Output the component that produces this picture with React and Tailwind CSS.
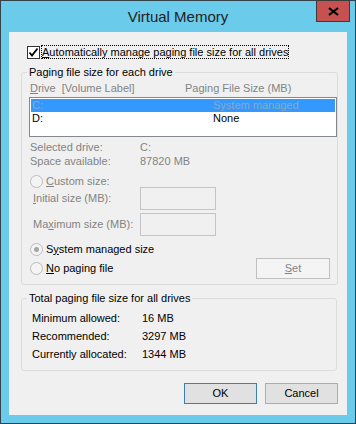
import React from 'react';

const Radio = ({ checked }) => (
  <span className="w-[13px] h-[13px] rounded-full border border-[#bcbcbc] bg-[#f4f4f4] flex items-center justify-center shrink-0">
    {checked && <span className="w-[5px] h-[5px] rounded-full bg-[#a6a6a6]" />}
  </span>
);

const Row = ({ label, value, className = '' }) => (
  <div className={`h-[14px] flex items-center ${className}`}>
    <span className="w-[110px]">{label}</span>
    <span>{value}</span>
  </div>
);

const App = () => {
  return (
    <div className="w-[356px] h-[424px] bg-[#6bcbea] border border-[#34424a] relative font-['Liberation_Sans',Arial,sans-serif] text-[11px] text-black">
      {/* title bar */}
      <div className="h-[31px] flex items-center justify-center">
        <span className="text-[15px] text-[#1e1e1e] leading-none">Virtual Memory</span>
      </div>
      <button className="absolute right-[5px] top-[-1px] w-[34px] h-[22px] bg-[#c75050] border border-[#3b3b3b] flex items-center justify-center">
        <svg width="11" height="9" viewBox="0 0 11 9">
          <path d="M1 1 L10 8 M10 1 L1 8" stroke="#000" strokeWidth="2.2" />
        </svg>
      </button>

      {/* client area */}
      <div className="ml-[8px] w-[338px] h-[383px] bg-[#f0f0f0] flex flex-col">
        <div className="mt-[13px] h-[14px] flex items-center ml-[18px]">
          <span className="w-[13px] h-[13px] border border-[#333] bg-white flex items-center justify-center shrink-0">
            <svg width="11" height="11" viewBox="0 0 11 11">
              <path d="M1.5 5.5 L4 8.5 L9.5 1.5" stroke="#000" strokeWidth="1.8" fill="none" />
            </svg>
          </span>
          <span className="ml-[1px] border border-dotted border-black leading-[12px]">
            <u>A</u>utomatically manage paging file size for all drives
          </span>
        </div>

        <fieldset className="mt-[5px] ml-[12px] w-[316px] border border-[#dcdcdc] rounded-[3px] pb-[5px]">
          <legend className="ml-[5px] px-[2px] leading-4">Paging file size for each drive</legend>
          <div className="mt-[1px] h-[14px] flex items-center pl-[8px] text-[#838383]">
            <span className="w-[155px]">
              <u>D</u>rive&nbsp; [Volume Label]
            </span>
            <span>Paging File Size (MB)</span>
          </div>

          <div className="mt-[2px] ml-[7px] w-[308px] h-[40px] border border-[#828790] bg-white pt-[1px] px-[1px]">
            <div className="h-[13px] flex items-center pl-[1px] bg-[#3399ff] text-[#8fa6c2]">
              <span className="w-[181px]">C:</span>
              <span>System managed</span>
            </div>
            <div className="h-[13px] flex items-center pl-[1px]">
              <span className="w-[181px]">D:</span>
              <span>None</span>
            </div>
          </div>

          <div className="mt-[3px] pl-[8px] text-[#838383]">
            <Row label="Selected drive:" value="C:" />
            <Row label="Space available:" value="87820 MB" />
          </div>

          <div className="mt-[7px] h-[12px] flex items-center pl-[8px] text-[#838383]">
            <Radio />
            <span className="ml-[3px]">
              <u>C</u>ustom size:
            </span>
          </div>
          <div className="h-[23px] flex items-center pl-[11px] text-[#838383]">
            <span className="w-[107px]">
              <u>I</u>nitial size (MB):
            </span>
            <span className="w-[76px] h-[23px] border border-[#c4c4c4]" />
          </div>
          <div className="mt-[3px] h-[23px] flex items-center pl-[11px] text-[#838383]">
            <span className="w-[107px]">
              Ma<u>x</u>imum size (MB):
            </span>
            <span className="w-[76px] h-[23px] border border-[#c4c4c4]" />
          </div>

          <div className="mt-[6px] h-[14px] flex items-center pl-[8px]">
            <Radio checked />
            <span className="ml-[3px]">
              S<u>y</u>stem managed size
            </span>
          </div>
          <div className="mt-[2px] h-[21px] flex items-center pl-[8px]">
            <Radio />
            <span className="ml-[3px]">
              <u>N</u>o paging file
            </span>
            <span className="ml-auto mr-[7px] w-[74px] h-[21px] border border-[#bfbfbf] bg-[#f4f4f4] text-[#838383] flex items-center justify-center">
              <u>S</u>et
            </span>
          </div>
        </fieldset>

        <fieldset className="mt-[5px] ml-[12px] w-[316px] border border-[#dcdcdc] rounded-[3px] pb-[9px]">
          <legend className="ml-[5px] px-[2px] leading-4">Total paging file size for all drives</legend>
          <div className="mt-[5px] pl-[10px] flex flex-col gap-[4px]">
            <Row label="Minimum allowed:" value="16 MB" />
            <Row label="Recommended:" value="3297 MB" />
            <Row label="Currently allocated:" value="1344 MB" />
          </div>
        </fieldset>

        <div className="mt-[12px] pr-[9px] flex justify-end gap-[8px]">
          <button className="w-[73px] h-[21px] bg-[#e1e1e1] border border-[#3c7fb1] flex items-center justify-center">
            OK
          </button>
          <button className="w-[73px] h-[21px] bg-[#e1e1e1] border border-[#adadad] flex items-center justify-center">
            Cancel
          </button>
        </div>
      </div>
    </div>
  );
};

export default App;
